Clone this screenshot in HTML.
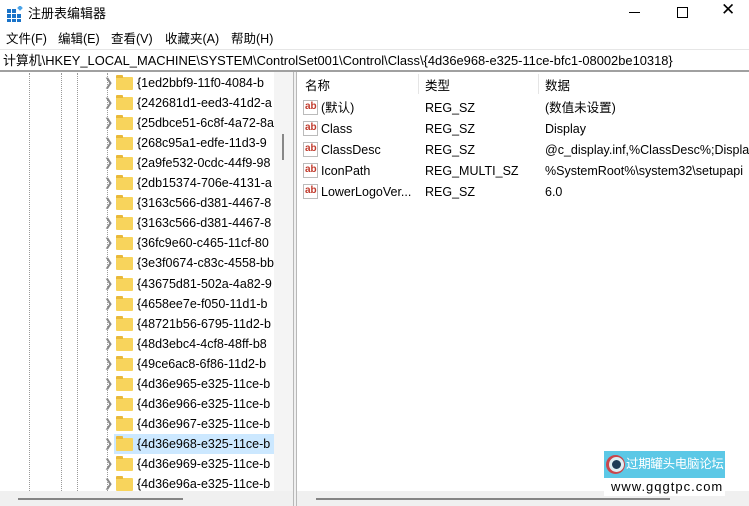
<!DOCTYPE html>
<html><head><meta charset="utf-8"><style>
*{margin:0;padding:0;box-sizing:border-box}
body{width:749px;height:506px;overflow:hidden;background:#fff;font-family:"Liberation Sans","Noto Sans CJK SC",sans-serif;font-size:12.5px;line-height:16px;color:#000;position:relative}
.a{position:absolute;white-space:nowrap}
.row{position:absolute;left:0;height:20px;width:274px;overflow:hidden;white-space:nowrap}
.row .chev{position:absolute;left:104px;top:2px;color:#888;font-size:11px}
.row .fold{position:absolute;left:116px;top:4px;width:17px;height:13px;background:#f8d45c;border-radius:1px}
.row .fold:before{content:"";position:absolute;left:0;top:-2px;width:7px;height:3px;background:#e9b93a;border-radius:1px 1px 0 0}
.row .t{position:absolute;left:137px;top:2px;font-size:12.5px;white-space:nowrap}
.dl{position:absolute;top:73px;height:418px;border-left:1px dotted #999}
.ab{position:absolute;left:303px;width:15px;height:15px;border:1px solid #bbb;background:#fff;color:#c0392b;font-size:10px;font-weight:bold;line-height:12px;text-align:left;padding-left:1px}
</style></head><body>
<svg class="a" style="left:7px;top:6px" width="16" height="16" viewBox="0 0 16 16"><g fill="#1a73c8"><rect x="0" y="3" width="4" height="4"/><rect x="5" y="3" width="4" height="4"/><rect x="0" y="8" width="4" height="4"/><rect x="5" y="8" width="4" height="4"/><rect x="10" y="8" width="4" height="4"/><rect x="0" y="13" width="4" height="3"/><rect x="5" y="13" width="4" height="3"/><rect x="10" y="13" width="4" height="3"/></g><rect x="11" y="0" width="4" height="4" fill="#4aa3e8" transform="rotate(45 13 2)"/></svg>
<div class="a" style="left:28px;top:6px;font-size:13px">注册表编辑器</div>
<div class="a" style="left:629px;top:12px;width:11px;border-top:1px solid #000"></div>
<div class="a" style="left:677px;top:7px;width:11px;height:11px;border:1px solid #000"></div>
<div class="a" style="left:721px;top:2px;font-size:17px;font-weight:300">✕</div>
<div class="a" style="left:6px;top:31px">文件(F)</div>
<div class="a" style="left:58px;top:31px">编辑(E)</div>
<div class="a" style="left:111px;top:31px">查看(V)</div>
<div class="a" style="left:165px;top:31px">收藏夹(A)</div>
<div class="a" style="left:231px;top:31px">帮助(H)</div>
<div class="a" style="left:0;top:49px;width:749px;height:23px;border-top:1px solid #e6e6e6;border-bottom:2px solid #a0a0a0"></div>
<div class="a" style="left:3px;top:53px;font-size:12.9px">计算机\HKEY_LOCAL_MACHINE\SYSTEM\ControlSet001\Control\Class\{4d36e968-e325-11ce-bfc1-08002be10318}</div>
<div class="dl" style="left:29px"></div><div class="dl" style="left:61px"></div><div class="dl" style="left:77px"></div><div class="dl" style="left:107px"></div>
<div id="tree"></div>
<div class="a" style="left:274px;top:72px;width:19px;height:419px;background:#f4f4f4"></div>
<div class="a" style="left:282px;top:134px;width:2px;height:26px;background:#888"></div>
<div class="a" style="left:293px;top:72px;width:4px;height:434px;border-left:1px solid #b8b8b8;border-right:1px solid #b8b8b8;background:#f0f0f0"></div>
<div class="a" style="left:418px;top:74px;height:20px;border-left:1px solid #e5e5e5"></div>
<div class="a" style="left:538px;top:74px;height:20px;border-left:1px solid #e5e5e5"></div>
<div class="a" style="left:305px;top:78px">名称</div>
<div class="a" style="left:425px;top:78px">类型</div>
<div class="a" style="left:545px;top:78px">数据</div>
<div class="ab" style="top:100px">ab</div><div class="a" style="left:321px;top:100px">(默认)</div><div class="a" style="left:425px;top:100px">REG_SZ</div><div class="a" style="left:545px;top:100px">(数值未设置)</div>
<div class="ab" style="top:121px">ab</div><div class="a" style="left:321px;top:121px">Class</div><div class="a" style="left:425px;top:121px">REG_SZ</div><div class="a" style="left:545px;top:121px">Display</div>
<div class="ab" style="top:142px">ab</div><div class="a" style="left:321px;top:142px">ClassDesc</div><div class="a" style="left:425px;top:142px">REG_SZ</div><div class="a" style="left:545px;top:142px">@c_display.inf,%ClassDesc%;Display</div>
<div class="ab" style="top:163px">ab</div><div class="a" style="left:321px;top:163px">IconPath</div><div class="a" style="left:425px;top:163px">REG_MULTI_SZ</div><div class="a" style="left:545px;top:163px">%SystemRoot%\system32\setupapi</div>
<div class="ab" style="top:184px">ab</div><div class="a" style="left:321px;top:184px">LowerLogoVer...</div><div class="a" style="left:425px;top:184px">REG_SZ</div><div class="a" style="left:545px;top:184px">6.0</div>
<div class="a" style="left:0;top:491px;width:293px;height:15px;background:#f0f0f0"></div>
<div class="a" style="left:297px;top:491px;width:452px;height:15px;background:#f0f0f0"></div>
<div class="a" style="left:18px;top:498px;width:165px;height:2px;background:#858585"></div>
<div class="a" style="left:316px;top:498px;width:354px;height:2px;background:#858585"></div>
<div class="a" style="left:604px;top:451px;width:121px;height:27px;background:#5cc8e6;overflow:hidden"></div>
<div class="a" style="left:606px;top:455px;width:19px;height:19px;border-radius:50%;background:#c9474d"></div>
<div class="a" style="left:609px;top:457px;width:15px;height:15px;border-radius:50%;background:#1e3b56;border:3px solid #dfeef3"></div>
<div class="a" style="left:626px;top:456px;color:#fff;font-size:12.5px;letter-spacing:-0.3px">过期罐头电脑论坛</div>
<div class="a" style="left:604px;top:478px;width:121px;height:18px;background:#fff"></div>
<div class="a" style="left:611px;top:479px;font-size:13px;letter-spacing:1px">www.gqgtpc.com</div>
<script>
var n=["{1ed2bbf9-11f0-4084-b","{242681d1-eed3-41d2-a","{25dbce51-6c8f-4a72-8a","{268c95a1-edfe-11d3-9","{2a9fe532-0cdc-44f9-98","{2db15374-706e-4131-a","{3163c566-d381-4467-8","{3163c566-d381-4467-8","{36fc9e60-c465-11cf-80","{3e3f0674-c83c-4558-bb","{43675d81-502a-4a82-9","{4658ee7e-f050-11d1-b","{48721b56-6795-11d2-b","{48d3ebc4-4cf8-48ff-b8","{49ce6ac8-6f86-11d2-b","{4d36e965-e325-11ce-b","{4d36e966-e325-11ce-b","{4d36e967-e325-11ce-b","{4d36e968-e325-11ce-b","{4d36e969-e325-11ce-b","{4d36e96a-e325-11ce-b"];
var h="";n.forEach(function(s,i){var y=73+i*20.05;h+='<div class="row" style="top:'+y+'px">'+(i==18?'<div style="position:absolute;left:114px;top:0;width:160px;height:20px;background:#cce8ff"></div>':'')+'<span class="chev">&#x276F;</span><div class="fold"></div><span class="t">'+s+'</span></div>';});
document.getElementById("tree").innerHTML=h;
</script>
</body></html>
